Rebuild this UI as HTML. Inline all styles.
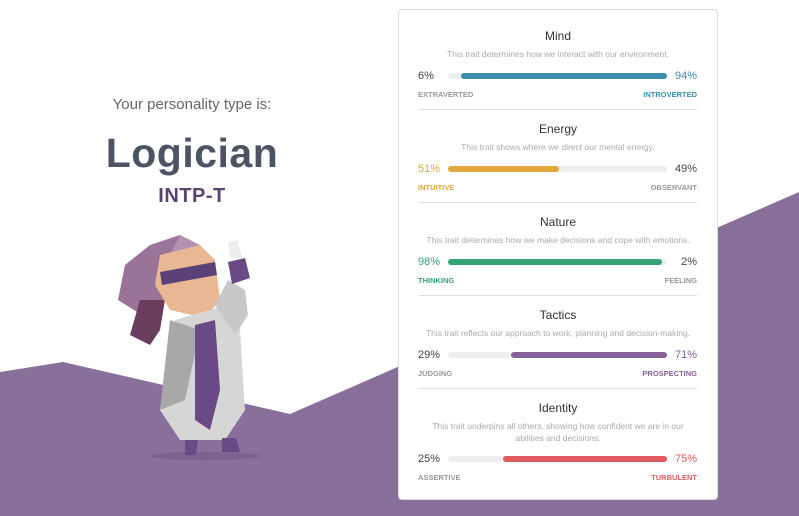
<!DOCTYPE html>
<html><head><style>
*{margin:0;padding:0;box-sizing:border-box}
body{width:799px;height:516px;position:relative;overflow:hidden;background:#fff;font-family:"Liberation Sans",sans-serif}
.abs{position:absolute}
.card{position:absolute;left:398px;top:9px;width:320px;height:491px;background:#fff;border:1px solid #ddd;border-radius:4px}
.t{position:absolute;left:0;width:318px;text-align:center;font-size:12px;color:#333}
.d{position:absolute;left:14px;width:290px;text-align:center;font-size:8.5px;color:#aaa;line-height:12px}
.pl,.pr{position:absolute;font-size:11px;color:#444}
.pl{left:19px}.pr{right:20px}
.ll,.lr{position:absolute;font-size:7.5px;font-weight:bold;color:#999}
.ll{left:19px}.lr{right:20px}
.track{position:absolute;left:49px;width:219px;height:6px;background:#eee;border-radius:3px}
.fill{position:absolute;top:0;height:6px;border-radius:3px}
.hr{position:absolute;left:20px;width:278px;height:1px;background:#ddd}
</style></head><body>
<svg class="abs" style="left:0;top:0" width="799" height="516">
<polygon points="0,372 63,362 290,414 799,192 799,516 0,516" fill="#88709a"/>
<ellipse cx="205" cy="456" rx="55" ry="4" fill="#7a6190"/>
<polygon points="125,265 150,245 180,235 190,255 165,300 150,320 118,300" fill="#9a7399"/>
<polygon points="140,300 165,300 160,330 150,345 130,335" fill="#6b3d5c"/>
<polygon points="180,235 200,245 170,255" fill="#b690b0"/>
<polygon points="160,255 200,245 215,260 220,300 205,318 170,310 155,285" fill="#e8b793"/>
<polygon points="160,272 215,262 217,275 162,285" fill="#5c4178"/>
<polygon points="175,320 210,310 245,300 240,330 245,410 225,440 180,440 160,410" fill="#d6d6d6"/>
<polygon points="170,320 200,330 185,400 160,410" fill="#a8a8a8"/>
<polygon points="195,325 215,320 220,390 210,430 195,420" fill="#6a4a86"/>
<polygon points="215,305 228,280 245,290 248,315 235,335" fill="#c8c8c8"/>
<polygon points="228,262 245,258 250,278 232,284" fill="#6a4a86"/>
<polygon points="228,242 238,240 242,258 230,258" fill="#eee"/>
<polygon points="185,440 198,440 196,455 185,455" fill="#6a4a86"/>
<polygon points="222,438 236,438 240,452 222,452" fill="#6a4a86"/>
</svg>
<div class="abs" style="left:0;width:384px;top:96px;text-align:center;font-size:15px;color:#666">Your personality type is:</div>
<div class="abs" style="left:0;width:384px;top:130px;text-align:center;font-size:41px;font-weight:bold;color:#4c5464;letter-spacing:0.5px">Logician</div>
<div class="abs" style="left:0;width:384px;top:185px;text-align:center;font-size:20px;font-weight:bold;color:#5c4470;letter-spacing:0.5px">INTP-T</div>
<div class="card">
<div class="t" style="top:19px">Mind</div>
<div class="d" style="top:38px">This trait determines how we interact with our environment.</div>
<div class="pl" style="top:60px">6%</div><div class="pr" style="top:60px;color:#3b8eab">94%</div>
<div class="track" style="top:63px"><div class="fill" style="left:13px;width:206px;background:#3b8eab"></div></div>
<div class="ll" style="top:80px">EXTRAVERTED</div><div class="lr" style="top:80px;color:#3b8eab">INTROVERTED</div>
<div class="hr" style="top:99px"></div>
<div class="t" style="top:112px">Energy</div>
<div class="d" style="top:131px">This trait shows where we direct our mental energy.</div>
<div class="pl" style="top:153px;color:#e0a93a">51%</div><div class="pr" style="top:153px">49%</div>
<div class="track" style="top:156px"><div class="fill" style="left:0;width:111px;background:#e0a93a"></div></div>
<div class="ll" style="top:173px;color:#e0a93a">INTUITIVE</div><div class="lr" style="top:173px">OBSERVANT</div>
<div class="hr" style="top:192px"></div>
<div class="t" style="top:205px">Nature</div>
<div class="d" style="top:224px">This trait determines how we make decisions and cope with emotions.</div>
<div class="pl" style="top:246px;color:#33a474">98%</div><div class="pr" style="top:246px">2%</div>
<div class="track" style="top:249px"><div class="fill" style="left:0;width:214px;background:#33a474"></div></div>
<div class="ll" style="top:266px;color:#33a474">THINKING</div><div class="lr" style="top:266px">FEELING</div>
<div class="hr" style="top:285px"></div>
<div class="t" style="top:298px">Tactics</div>
<div class="d" style="top:317px">This trait reflects our approach to work, planning and decision-making.</div>
<div class="pl" style="top:339px">29%</div><div class="pr" style="top:339px;color:#88619a">71%</div>
<div class="track" style="top:342px"><div class="fill" style="left:63px;width:156px;background:#88619a"></div></div>
<div class="ll" style="top:359px">JUDGING</div><div class="lr" style="top:359px;color:#88619a">PROSPECTING</div>
<div class="hr" style="top:378px"></div>
<div class="t" style="top:391px">Identity</div>
<div class="d" style="top:410px;left:24px;width:270px">This trait underpins all others, showing how confident we are in our abilities and decisions.</div>
<div class="pl" style="top:443px">25%</div><div class="pr" style="top:443px;color:#e05a5f">75%</div>
<div class="track" style="top:446px"><div class="fill" style="left:55px;width:164px;background:#e05a5f"></div></div>
<div class="ll" style="top:463px">ASSERTIVE</div><div class="lr" style="top:463px;color:#e05a5f">TURBULENT</div>
</div>
</body></html>
